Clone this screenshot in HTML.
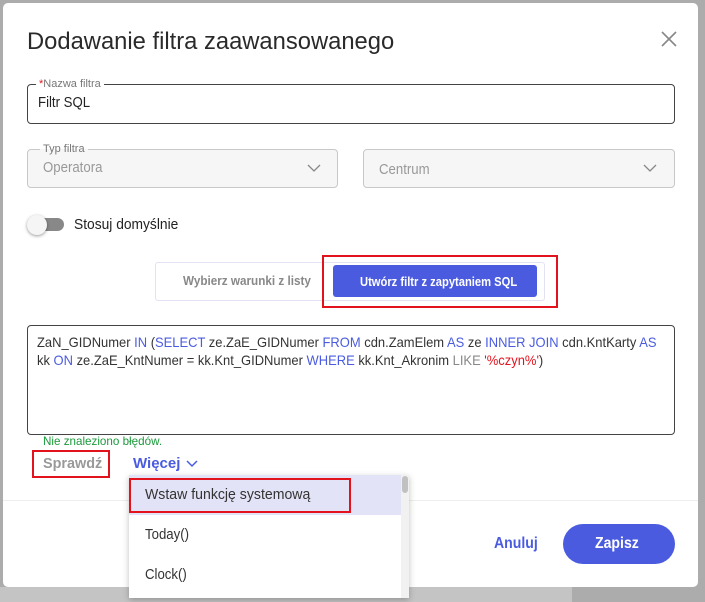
<!DOCTYPE html>
<html><head><meta charset="utf-8"><style>
*{box-sizing:border-box;margin:0;padding:0}
body{width:705px;height:602px;background:#acacac;position:relative;overflow:hidden;font-family:"Liberation Sans",sans-serif;color:#333}
.a{position:absolute}
.n{display:inline-block;transform:scaleX(.88);transform-origin:left center;white-space:nowrap}
.dlg{left:3px;top:3px;width:695px;height:584px;background:#fff;border-radius:5px}
.fs{border:1px solid #444;border-radius:4px}
.sel{background:#f6f6f6;border:1px solid #c8c8c8;border-radius:4px}
.lab{background:#fff;font-size:11px;color:#777;padding:0 3px;line-height:12px}
.red{border:2px solid #e3131e}
.k{color:#4a5be0}
</style></head><body>
<div class="a" style="left:0;top:587px;width:572px;height:15px;background:#c4c4c4"></div>
<div class="a dlg"></div>
<div class="a n" style="left:27px;top:28px;font-size:24px;color:#2a2a2a;transform:scaleX(.99)">Dodawanie filtra zaawansowanego</div>
<svg class="a" style="left:661px;top:31px" width="16" height="16"><path d="M1 1L15 15M15 1L1 15" stroke="#888" stroke-width="1.6"/></svg>

<div class="a fs" style="left:27px;top:84px;width:648px;height:40px"></div>
<div class="a lab" style="left:36px;top:78px"><span class="n" style="transform:none"><span style="color:#e3131e">*</span>Nazwa filtra</span></div>
<div class="a n" style="left:38px;top:94px;font-size:15px;color:#222">Filtr SQL</div>

<div class="a sel" style="left:27px;top:149px;width:311px;height:39px"></div>
<div class="a lab" style="left:40px;top:143px;background:linear-gradient(#fff 50%,#f6f6f6 50%)"><span class="n" style="transform:none">Typ filtra</span></div>
<div class="a n" style="left:43px;top:159px;font-size:15px;color:#999">Operatora</div>
<svg class="a" style="left:307px;top:164px" width="14" height="9"><path d="M1 1L7 7L13 1" stroke="#888" fill="none" stroke-width="1.3"/></svg>
<div class="a sel" style="left:363px;top:149px;width:312px;height:39px"></div>
<div class="a n" style="left:379px;top:161px;font-size:15px;color:#999">Centrum</div>
<svg class="a" style="left:643px;top:164px" width="14" height="9"><path d="M1 1L7 7L13 1" stroke="#888" fill="none" stroke-width="1.3"/></svg>

<div class="a" style="left:30px;top:218px;width:34px;height:13px;border-radius:7px;background:#888"></div>
<div class="a" style="left:27px;top:215px;width:20px;height:20px;border-radius:50%;background:#f5f5f5;box-shadow:0 1px 3px rgba(0,0,0,.4)"></div>
<div class="a n" style="left:74px;top:216px;font-size:15px;color:#222;transform:scaleX(.92)">Stosuj domyślnie</div>

<div class="a" style="left:155px;top:262px;width:390px;height:39px;border:1px solid #e2e2f2;border-radius:3px"></div>
<div class="a n" style="left:183px;top:273px;font-size:13px;color:#888;font-weight:bold;transform:scaleX(.9)">Wybierz warunki z listy</div>
<div class="a" style="left:333px;top:265px;width:204px;height:32px;background:#4a5be0;border-radius:3px"></div>
<div class="a n" style="left:360px;top:274px;font-size:13px;color:#fff;font-weight:bold;transform:scaleX(.86)">Utwórz filtr z zapytaniem SQL</div>
<div class="a red" style="left:322px;top:255px;width:236px;height:53px"></div>

<div class="a fs" style="left:27px;top:325px;width:648px;height:110px"></div>
<div class="a n" style="left:37px;top:333px;font-size:14px;line-height:18px;color:#333;transform:scaleX(.925)">ZaN_GIDNumer <span class="k">IN</span> (<span class="k">SELECT</span> ze.ZaE_GIDNumer <span class="k">FROM</span> cdn.ZamElem <span class="k">AS</span> ze <span class="k">INNER JOIN</span> cdn.KntKarty <span class="k">AS</span><br>kk <span class="k">ON</span> ze.ZaE_KntNumer = kk.Knt_GIDNumer <span class="k">WHERE</span> kk.Knt_Akronim <span style="color:#888">LIKE</span> <span style="color:#e3131e">'%czyn%'</span>)</div>
<div class="a n" style="left:43px;top:434px;font-size:12px;color:#1a9a3a;transform:scaleX(.97)">Nie znaleziono błędów.</div>
<div class="a n" style="left:43px;top:455px;font-size:15px;color:#999;font-weight:bold;transform:scaleX(.96)">Sprawdź</div>
<div class="a red" style="left:32px;top:450px;width:78px;height:28px"></div>
<div class="a n" style="left:133px;top:455px;font-size:15px;color:#4a5be0;font-weight:bold;transform:none">Więcej</div>
<svg class="a" style="left:186px;top:460px" width="12" height="8"><path d="M1 1L6 6L11 1" stroke="#4a5be0" fill="none" stroke-width="1.5"/></svg>

<div class="a" style="left:3px;top:500px;width:695px;height:1px;background:#eee"></div>
<div class="a n" style="left:494px;top:535px;font-size:16px;color:#4a5be0;font-weight:bold">Anuluj</div>
<div class="a" style="left:563px;top:524px;width:112px;height:40px;border-radius:20px;background:#4a5be0"></div>
<div class="a n" style="left:595px;top:535px;font-size:16px;color:#fff;font-weight:bold">Zapisz</div>

<div class="a" style="left:129px;top:475px;width:280px;height:123px;background:#fff;box-shadow:0 2px 6px rgba(0,0,0,.25)"></div>
<div class="a" style="left:129px;top:475px;width:272px;height:40px;background:#e3e3f7"></div>
<div class="a" style="left:401px;top:475px;width:8px;height:123px;background:#f1f1f1"></div>
<div class="a" style="left:402px;top:476px;width:6px;height:17px;background:#c1c1c1;border-radius:3px"></div>
<div class="a n" style="left:145px;top:486px;font-size:15px;color:#333;transform:scaleX(.94)">Wstaw funkcję systemową</div>
<div class="a red" style="left:129px;top:478px;width:222px;height:35px"></div>
<div class="a n" style="left:145px;top:526px;font-size:15px;color:#333">Today()</div>
<div class="a n" style="left:145px;top:566px;font-size:15px;color:#333">Clock()</div>
</body></html>
